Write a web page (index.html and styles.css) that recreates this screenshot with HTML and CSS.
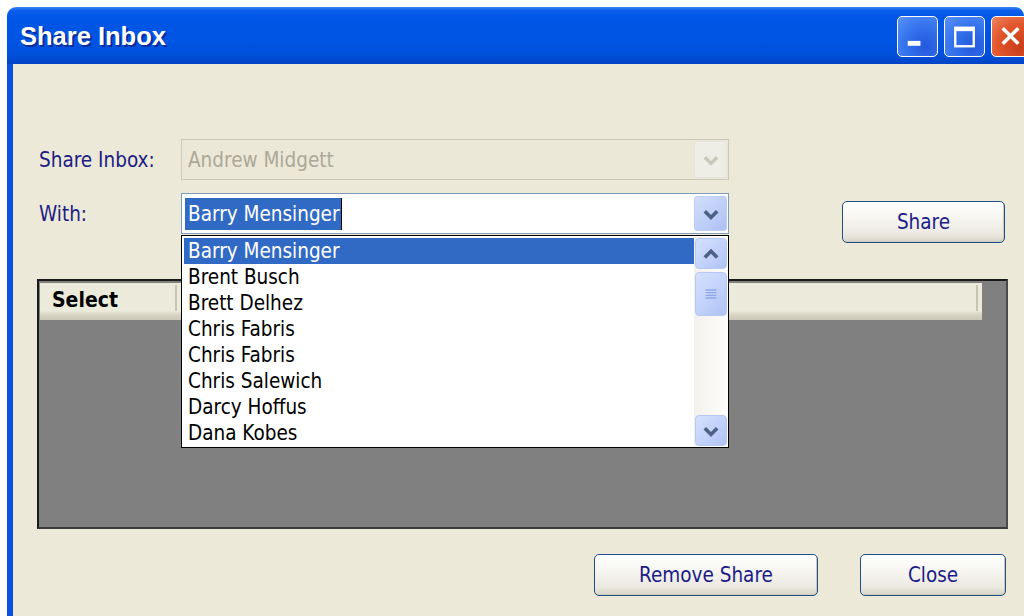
FILE: index.html
```html
<!DOCTYPE html>
<html lang="en">
<head>
<meta charset="utf-8">
<title>Share Inbox</title>
<link rel="stylesheet" href="styles.css">
</head>
<body>
<div class="window">
  <div class="titlebar">
    <span class="title">Share Inbox</span>
    <div class="caption-buttons">
      <span class="cap-btn"><svg viewBox="0 0 40 40" width="40" height="40"><rect x="10" y="24" width="13" height="5" fill="#fff"/></svg></span>
      <span class="cap-btn"><svg viewBox="0 0 40 40" width="40" height="40"><rect x="10.5" y="10.5" width="19" height="19" fill="none" stroke="#fff" stroke-width="2.4"/><rect x="10" y="10" width="20" height="4" fill="#fff"/></svg></span>
      <span class="cap-btn close"><svg viewBox="0 0 40 40" width="40" height="40"><path d="M11 11 L27 27 M27 11 L11 27" stroke="#fff" stroke-width="3.6" fill="none"/></svg></span>
    </div>
  </div>
  <div class="frame">
    <div class="form">
      <span class="label">Share Inbox:</span>
      <div class="combo disabled">
        <span class="combo-text">Andrew Midgett</span>
        <span class="combo-btn"><svg viewBox="0 0 16 16" width="22" height="22"><path d="M3.5 6 L8 10.5 L12.5 6" fill="none" stroke="#C9C7BA" stroke-width="2.4"/></svg></span>
      </div>
      <span></span>
      <span class="label">With:</span>
      <div class="combo">
        <span class="combo-text"><span class="sel">Barry Mensinger</span></span>
        <span class="combo-btn"><svg viewBox="0 0 16 16" width="22" height="22"><path d="M3.5 6 L8 10.5 L12.5 6" fill="none" stroke="#4D6185" stroke-width="2.6"/></svg></span>
      </div>
      <button class="btn share">Share</button>
    </div>

    <div class="grid-panel">
      <div class="grid-header">
        <div class="col col-select">Select</div>
        <div class="col col-rest"></div>
      </div>
    </div>

    <div class="actions">
      <button class="btn remove">Remove Share</button>
      <button class="btn close-btn">Close</button>
    </div>

    <div class="dropdown">
      <ul class="items">
        <li class="active">Barry Mensinger</li>
        <li>Brent Busch</li>
        <li>Brett Delhez</li>
        <li>Chris Fabris</li>
        <li>Chris Fabris</li>
        <li>Chris Salewich</li>
        <li>Darcy Hoffus</li>
        <li>Dana Kobes</li>
      </ul>
      <div class="scrollbar">
        <span class="sb-btn"><svg viewBox="0 0 16 16" width="22" height="22"><path d="M3.5 10.5 L8 6 L12.5 10.5" fill="none" stroke="#4D6185" stroke-width="2.6"/></svg></span>
        <span class="sb-thumb"><svg viewBox="0 0 12 12" width="16" height="16"><path d="M2 3 H10 M2 5 H10 M2 7 H10 M2 9 H10" stroke="#8ea6e4" stroke-width="1"/></svg></span>
        <span class="sb-track"></span>
        <span class="sb-btn"><svg viewBox="0 0 16 16" width="22" height="22"><path d="M3.5 6 L8 10.5 L12.5 6" fill="none" stroke="#4D6185" stroke-width="2.6"/></svg></span>
      </div>
    </div>
  </div>
</div>
</body>
</html>
```
FILE: styles.css
```css
html, body {
  margin: 0;
  padding: 0;
  background: #ffffff;
  overflow: hidden;
  width: 1024px;
  height: 616px;
}

body {
  font-family: "DejaVu Sans Condensed", "DejaVu Sans", sans-serif;
  font-size: 20.5px;
}

.window {
  margin: 7px 0 0 7px;
  width: 1017px;
}

/* caption bar */
.titlebar {
  height: 57px;
  border-radius: 9px 9px 0 0;
  background: linear-gradient(to bottom, #3d86f5 0%, #0d5fec 6%, #0056e6 20%, #0054e3 60%, #004fd8 85%, #0243c6 100%);
  display: flex;
  align-items: center;
  justify-content: space-between;
}

.title {
  font-family: "Liberation Sans", Arial, sans-serif;
  font-weight: bold;
  font-size: 25.5px;
  color: #ffffff;
  padding-left: 13px;
  padding-top: 2px;
  text-shadow: 2px 2px 0 #0a2c9c;
}

.caption-buttons {
  display: flex;
  gap: 6px;
  margin-right: -8px;
  padding-top: 2px;
}

.cap-btn {
  width: 39px;
  height: 39px;
  border: 1.5px solid #ffffff;
  border-radius: 5px;
  background: radial-gradient(circle at 70% 75%, #2358dc 0%, #3675ee 55%, #5a92f5 100%);
  display: flex;
  align-items: center;
  justify-content: center;
}

.cap-btn svg {
  display: block;
}

.cap-btn.close {
  background: radial-gradient(circle at 70% 75%, #c83d1a 0%, #e2562c 55%, #ee8662 100%);
}

/* dialog body */
.frame {
  position: relative;
  border-left: 6px solid #0a4fe0;
  background: #ece9d8;
  height: 552px;
  padding-top: 75px;
  box-sizing: border-box;
}

.form {
  display: grid;
  grid-template-columns: 142px 548px auto;
  grid-template-rows: 41px 41px;
  row-gap: 13px;
  margin-left: 26px;
  align-items: center;
}

.label {
  color: #1c1c84;
}

.combo {
  height: 41px;
  box-sizing: border-box;
  border: 1px solid #7f9db9;
  background: #ffffff;
  display: flex;
  align-items: center;
  padding-left: 3px;
}

.combo-text {
  flex: 1;
  display: flex;
  align-items: center;
}

.combo.disabled {
  border-color: #cbc8b8;
  background: #ebe8d7;
}

.combo.disabled .combo-text {
  color: #aca899;
  padding-left: 3px;
}

.sel {
  background: #316ac5;
  color: #ffffff;
  height: 32px;
  line-height: 32px;
  padding: 0 1px 0 3px;
  border-right: 1px solid #000000;
}

.combo-btn {
  width: 33px;
  height: 35px;
  margin-right: 1px;
  box-sizing: border-box;
  border-radius: 3px;
  border: 1px solid #bccdf5;
  background: linear-gradient(135deg, #d2defb 0%, #bccdf8 60%, #aebff2 100%);
  display: flex;
  align-items: center;
  justify-content: center;
}

.combo-btn svg {
  display: block;
}

.combo.disabled .combo-btn {
  height: 37px;
  border-color: #e6e4dc;
  background: #eeede6;
}

/* push buttons */
.btn {
  font-family: "DejaVu Sans Condensed", "DejaVu Sans", sans-serif;
  font-size: 20.5px;
  color: #1c1c88;
  height: 42px;
  border: 1.5px solid #1f4f86;
  border-radius: 5px;
  background: linear-gradient(to bottom, #ffffff 0%, #f5f4ef 45%, #ebe9e0 80%, #d9d4c8 100%);
  box-shadow: inset -1px -1px 0 #cdc9bc;
  padding: 0;
}

.share {
  width: 163px;
  margin-left: 113px;
  margin-top: 8px;
  align-self: start;
}

/* grid view */
.grid-panel {
  margin: 45px 0 0 24px;
  width: 971px;
  height: 250px;
  box-sizing: border-box;
  border: 2px solid #1a1a1a;
  border-right-color: #4a4a4a;
  border-bottom-color: #3a3a3a;
  background: #808080;
  padding: 2px 0 0 1px;
}

.grid-header {
  display: flex;
  width: 942px;
  height: 37px;
  background: linear-gradient(to bottom, #ebeadb 0%, #ebeadb 76%, #e2decd 80%, #d6d2c2 88%, #cbc7b8 100%);
}

.col {
  height: 26px;
  margin-top: 2px;
  display: flex;
  align-items: center;
}

.col-select {
  width: 137px;
  padding-left: 12px;
  box-sizing: border-box;
  font-weight: bold;
  color: #000000;
  font-size: 21px;
  border-right: 2px solid #c7c5b2;
  padding-top: 3px;
}

.col-rest {
  width: 799px;
  border-right: 2px solid #c7c5b2;
}

/* bottom buttons */
.actions {
  display: flex;
  justify-content: flex-end;
  gap: 42px;
  margin-top: 25px;
  padding-right: 18px;
}

.remove {
  width: 224px;
}

.close-btn {
  width: 146px;
}

/* open drop-down list */
.dropdown {
  position: absolute;
  left: 168px;
  top: 171px;
  width: 548px;
  height: 213px;
  box-sizing: border-box;
  border: 1px solid #000000;
  background: #ffffff;
  display: flex;
  padding: 2px 1px 1px 2px;
}

.items {
  list-style: none;
  margin: 0;
  padding: 0;
  flex: 1;
}

.items li {
  height: 26px;
  line-height: 26px;
  padding-left: 4px;
  color: #000000;
  white-space: nowrap;
}

.items li.active {
  background: #316ac5;
  color: #ffffff;
}

.scrollbar {
  width: 33px;
  display: flex;
  flex-direction: column;
  background: linear-gradient(to right, #f3f1ec, #fdfdfb);
  margin-top: -1px;
}

.sb-btn,
.sb-thumb {
  box-sizing: border-box;
  width: 32px;
  margin-left: 1px;
  border: 1px solid #b6c8f3;
  border-radius: 4px;
  background: linear-gradient(135deg, #d4e0fc 0%, #c0d0fa 60%, #b0c2f3 100%);
  display: flex;
  align-items: center;
  justify-content: center;
}

.sb-btn {
  height: 31px;
}

.sb-btn:first-child {
  margin-top: 1px;
}

.sb-thumb {
  height: 44px;
  margin-top: 3px;
}

.sb-track {
  flex: 1;
}

.sb-btn svg,
.sb-thumb svg {
  display: block;
}
```
